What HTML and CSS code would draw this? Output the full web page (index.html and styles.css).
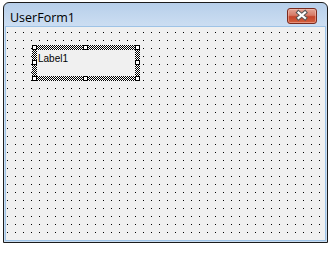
FILE: index.html
```html
<!DOCTYPE html>
<html lang="en">
<head>
    <meta charset="UTF-8">
    <title>UserForm1</title>
    <link rel="stylesheet" href="styles.css">
</head>
<body>
    <!-- 窗体 -->
    <div class="window">
        <div class="titlebar">
            <span class="title">UserForm1</span>
            <button class="close-btn" type="button">
                <svg width="30" height="16" viewBox="0 0 30 16">
                    <path d="M11.5 4.5 L18 10 M18 4.5 L11.5 10" stroke="#555" stroke-width="4.2" stroke-linecap="square"/>
                    <path d="M11.5 4.5 L18 10 M18 4.5 L11.5 10" stroke="#fff" stroke-width="2.2" stroke-linecap="square"/>
                </svg>
            </button>
        </div>

        <!-- 设计区 -->
        <div class="client">
            <div class="selection">
                <svg class="hatch" width="108" height="36" shape-rendering="crispEdges">
                    <defs>
                        <pattern id="dither" width="2" height="2" patternUnits="userSpaceOnUse">
                            <rect width="2" height="2" fill="#fff"/>
                            <rect width="1" height="1" fill="#000"/>
                            <rect x="1" y="1" width="1" height="1" fill="#000"/>
                        </pattern>
                    </defs>
                    <rect width="108" height="36" fill="url(#dither)"/>
                </svg>
                <div class="label">Label1</div>
                <span class="handle h-tl"></span>
                <span class="handle h-tm"></span>
                <span class="handle h-tr"></span>
                <span class="handle h-ml"></span>
                <span class="handle h-mr"></span>
                <span class="handle h-bl"></span>
                <span class="handle h-bm"></span>
                <span class="handle h-br"></span>
            </div>
        </div>
    </div>
</body>
</html>
```

FILE: styles.css
```css
/* 全局 */
body {
    margin: 0;
    padding: 2px 0 0 3px;
    background: #fff;
    font-family: "Open Sans", "Noto Sans", sans-serif;
}

/* 窗口外框 */
.window {
    box-sizing: border-box;
    width: 325px;
    height: 241px;
    border: 1px solid #1c1c1c;
    border-radius: 6px 6px 0 0;
    padding: 0 1px 1px;
    background: linear-gradient(#b7cfea, #d2e2f4 30px, #c9dcf0);
    display: flex;
    flex-direction: column;
}

/* 标题栏 */
.titlebar {
    height: 23px;
    display: flex;
    align-items: flex-start;
    justify-content: space-between;
}

.title {
    padding: 6px 0 0 5px;
    font-size: 12.5px;
    line-height: 17px;
    color: #000;
}

/* 关闭按钮 */
.close-btn {
    width: 30px;
    height: 16px;
    margin: 5px 9px 0 0;
    padding: 0;
    border: 1px solid #7a2a1e;
    border-radius: 3px;
    background: linear-gradient(#e3a596, #d67a66 45%, #c4442b 55%, #d4603d);
    box-shadow: inset 0 0 0 1px rgba(255, 210, 200, 0.45);
    display: flex;
    align-items: center;
    justify-content: center;
}

.close-btn svg {
    display: block;
    margin: -1px;
}

/* 网格区域 */
.client {
    position: relative;
    flex: 1;
    border: 1px solid #9ec3e6;
    background: #f0f0f0;
    overflow: hidden;
}

/* 网格点：竖线被横线遮罩，只剩交点 */
.client::before {
    content: "";
    position: absolute;
    left: 1px;
    top: 5px;
    right: 0;
    bottom: 0;
    background: repeating-linear-gradient(to right, #000 0 1px, transparent 1px 8px);
    -webkit-mask-image: repeating-linear-gradient(to bottom, #000 0 1px, transparent 1px 8px);
    mask-image: repeating-linear-gradient(to bottom, #000 0 1px, transparent 1px 8px);
}

/* 选中的标签 */
.selection {
    position: relative;
    z-index: 1;
    box-sizing: border-box;
    width: 108px;
    height: 36px;
    margin: 18px 0 0 26px;
    padding: 5px;
}

.hatch {
    position: absolute;
    left: 0;
    top: 0;
}

.label {
    position: relative;
    height: 100%;
    background: #f0f0f0;
    padding: 3px 0 0 1px;
    box-sizing: border-box;
    font-family: "Liberation Sans", Arial, sans-serif;
    font-size: 10px;
    line-height: 12px;
    color: #000;
}

/* 控制柄 */
.handle {
    position: absolute;
    box-sizing: border-box;
    width: 5px;
    height: 5px;
    border: 1px solid #000;
    background: #fff;
}

.h-tl { left: 0; top: 0; }
.h-tm { left: 51px; top: 0; }
.h-tr { right: 0; top: 0; }
.h-ml { left: 0; top: 15px; }
.h-mr { right: 0; top: 15px; }
.h-bl { left: 0; bottom: 0; }
.h-bm { left: 51px; bottom: 0; }
.h-br { right: 0; bottom: 0; }
```
